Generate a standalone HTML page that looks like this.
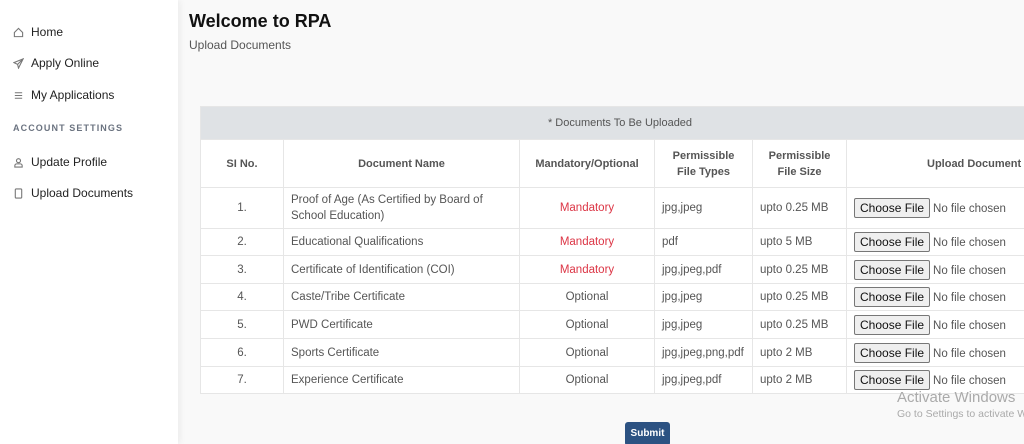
<!DOCTYPE html>
<html><head><style>
*{box-sizing:border-box;margin:0;padding:0}
html,body{width:1024px;height:444px;overflow:hidden}
body{font-family:"Liberation Sans",sans-serif;background:#f9f9f9;position:relative;color:#333}
.side{position:absolute;left:0;top:0;width:178px;height:444px;background:#fff;box-shadow:2px 0 6px rgba(0,0,0,.06)}
.nav{position:absolute;left:13px;font-size:12px;color:#222;display:flex;align-items:center}
.nav svg{width:11px;height:11px;margin-right:7px;stroke:#777;fill:none;stroke-width:1.2}
.sec{position:absolute;left:13px;top:123px;font-size:9px;font-weight:bold;letter-spacing:1.1px;color:#6b7380}
h1{position:absolute;left:189px;top:11px;font-size:18px;font-weight:bold;color:#111}
.sub{position:absolute;left:189px;top:38px;font-size:12px;color:#555}
table{position:absolute;left:200px;top:106px;border-collapse:collapse;background:#fff;font-size:11.5px;width:840px;line-height:16px}
td,th{border:1px solid #e6e6e6;color:#555}
th{font-weight:bold;font-size:11px;color:#555}
.top{background:#dfe2e5;height:33px;text-align:center;font-weight:normal;font-size:11px}
td{padding:0 7px;}
.c{text-align:center}
.m{color:#dc3545;text-align:center}
.btn{display:inline-block;border:1px solid #777;background:#efefef;border-radius:2px;padding:1px 5px;color:#111;font-size:12px;margin-right:3px;line-height:16px}
.sb{position:absolute;left:625px;top:422px;width:45px;height:24px;background:#2c5282;color:#fff;font-size:10px;font-weight:bold;border-radius:3px;text-align:center;line-height:22px;padding-top:1px}
.aw{position:absolute;left:897px;top:389px;font-size:15px;color:#aaa}
.aw2{position:absolute;left:897px;top:408px;font-size:10.5px;color:#aaa;white-space:nowrap}
</style></head><body>
<div class="side">
<div class="nav" style="top:25px"><svg viewBox="0 0 12 12"><path d="M1.5 6L6 1.5 10.5 6V10.5H1.5Z"/></svg>Home</div>
<div class="nav" style="top:56px"><svg viewBox="0 0 12 12"><path d="M11 1L1 5l4 2 1 4z M5 7l6-6"/></svg>Apply Online</div>
<div class="nav" style="top:88px"><svg viewBox="0 0 12 12"><path d="M2 3h8M2 6h8M2 9h8"/></svg>My Applications</div>
<div class="sec">ACCOUNT SETTINGS</div>
<div class="nav" style="top:155px"><svg viewBox="0 0 12 12"><circle cx="6" cy="4" r="2.2"/><path d="M2 11v-1.5a2 2 0 012-2h4a2 2 0 012 2V11Z"/></svg>Update Profile</div>
<div class="nav" style="top:186px"><svg viewBox="0 0 12 12"><rect x="2.5" y="1" width="7" height="10" rx="1"/></svg>Upload Documents</div>
</div>
<h1>Welcome to RPA</h1>
<div class="sub">Upload Documents</div>
<table>
<tr><th colspan="6" class="top">* Documents To Be Uploaded</th></tr>
<tr style="height:48px"><th style="width:83px">SI No.</th><th style="width:236px">Document Name</th><th style="width:135px">Mandatory/Optional</th><th style="width:98px">Permissible<br>File Types</th><th style="width:94px">Permissible<br>File Size</th><th style="text-align:left;padding-left:80px">Upload Document</th></tr>
<tr style="height:41px"><td class="c">1.</td><td>Proof of Age (As Certified by Board of School Education)</td><td class="m">Mandatory</td><td>jpg,jpeg</td><td>upto 0.25 MB</td><td><span class="btn">Choose File</span>No file chosen</td></tr>
<tr style="height:27px"><td class="c">2.</td><td>Educational Qualifications</td><td class="m">Mandatory</td><td>pdf</td><td>upto 5 MB</td><td><span class="btn">Choose File</span>No file chosen</td></tr>
<tr style="height:28px"><td class="c">3.</td><td>Certificate of Identification (COI)</td><td class="m">Mandatory</td><td>jpg,jpeg,pdf</td><td>upto 0.25 MB</td><td><span class="btn">Choose File</span>No file chosen</td></tr>
<tr style="height:27px"><td class="c">4.</td><td>Caste/Tribe Certificate</td><td class="c">Optional</td><td>jpg,jpeg</td><td>upto 0.25 MB</td><td><span class="btn">Choose File</span>No file chosen</td></tr>
<tr style="height:28px"><td class="c">5.</td><td>PWD Certificate</td><td class="c">Optional</td><td>jpg,jpeg</td><td>upto 0.25 MB</td><td><span class="btn">Choose File</span>No file chosen</td></tr>
<tr style="height:28px"><td class="c">6.</td><td>Sports Certificate</td><td class="c">Optional</td><td>jpg,jpeg,png,pdf</td><td>upto 2 MB</td><td><span class="btn">Choose File</span>No file chosen</td></tr>
<tr style="height:27px"><td class="c">7.</td><td>Experience Certificate</td><td class="c">Optional</td><td>jpg,jpeg,pdf</td><td>upto 2 MB</td><td><span class="btn">Choose File</span>No file chosen</td></tr>
</table>
<div class="aw">Activate Windows</div>
<div class="aw2">Go to Settings to activate Windows.</div>
<div class="sb">Submit</div>
</body></html>
